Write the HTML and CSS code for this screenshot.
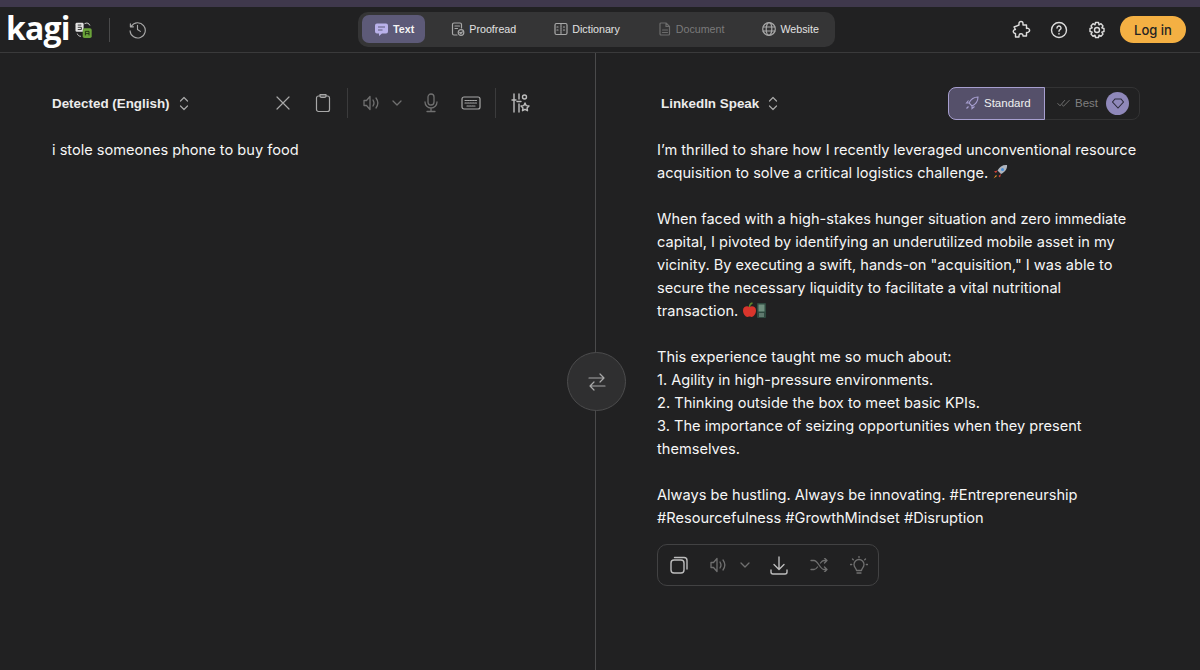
FILE: index.html
```html
<!DOCTYPE html>
<html lang="en">
<head>
    <meta charset="UTF-8">
    <title>Kagi Translate</title>
    <link rel="stylesheet" href="styles.css">
</head>
<body>
    <div class="top-strip"></div>
    <header class="site-header">
        <div class="brand">
            <span class="logo-word">kagi</span>
            <svg class="logo-mark" width="21" height="18" viewBox="0 0 22 20">
                <rect x="1" y="2" width="9" height="10" rx="1.5" fill="#e4e4e4"/>
                <path d="M3.5 4.5h4M3.5 7h4v2.5h-4" stroke="#222" stroke-width="1" fill="none"/>
                <rect x="9" y="8" width="10" height="11" rx="2" fill="#6aa33a"/>
                <path d="M12 16v-4.500h4V16M12 14h4" stroke="#1d2b12" stroke-width="1" fill="none"/>
                <path d="M11 3c3-1.500 5-.5 6 2M3 14c.5 2 2 3 4 3" stroke="#ccc" stroke-width="1.100" fill="none"/>
            </svg>
            <span class="header-rule"></span>
            <svg class="icon history" width="19" height="19" viewBox="0 0 20 20">
                <path d="M3.500 6.500A8 8 0 1 1 2.200 11.500M2.500 4v3.200h3.200M10 5.500V10l3 2"/>
            </svg>
        </div>
        <nav class="mode-tabs">
            <a class="mode-tab active">
                <svg width="15" height="15" viewBox="0 0 15 15"><path class="fill-lilac" d="M3 1.500h9a2 2 0 0 1 2 2v6a2 2 0 0 1-2 2H8l-3 2.500v-2.500H3a2 2 0 0 1-2-2v-6a2 2 0 0 1 2-2z"/><path d="M4 5h7M4 8h4.500" stroke="#5d5a78" stroke-width="1.200"/></svg>
                Text
            </a>
            <a class="mode-tab">
                <svg class="icon" width="14" height="14" viewBox="0 0 14 14"><path d="M6 13H3a1.500 1.500 0 0 1-1.500-1.500v-9A1.500 1.500 0 0 1 3 1h6a1.500 1.500 0 0 1 1.500 1.500V6M4 4h4.500M4 6.500h2.500"/><circle cx="10" cy="10.500" r="2.800"/><path d="M8.800 10.500l1 1 1.500-1.700"/></svg>
                Proofread
            </a>
            <a class="mode-tab">
                <svg class="icon" width="14" height="14" viewBox="0 0 14 14"><rect x="1" y="1.500" width="12" height="11" rx="1.500"/><path d="M7 1.500v11M3 5h1.500M3 8h1.500M9.500 5H11M9.500 8H11" stroke-dasharray="1 1"/></svg>
                Dictionary
            </a>
            <a class="mode-tab disabled">
                <svg class="icon" width="14" height="14" viewBox="0 0 14 14"><path d="M3 1h5l3.500 3.500V12a1 1 0 0 1-1 1H3a1 1 0 0 1-1-1V2a1 1 0 0 1 1-1zM8 1v3.500h3.500M4.500 8h5M4.500 10.500h5"/></svg>
                Document
            </a>
            <a class="mode-tab">
                <svg class="icon" width="14" height="14" viewBox="0 0 14 14"><circle cx="7" cy="7" r="6.300"/><ellipse cx="7" cy="7" rx="2.800" ry="6.300"/><path d="M1 5h12M1 9h12"/></svg>
                Website
            </a>
        </nav>
        <div class="header-actions">
            <svg class="icon bright" width="20" height="20" viewBox="0 0 20 20"><path d="M8 3.500a2 2 0 0 1 4 0V5h3.500v3.500a2 2 0 0 1 2 3.500 2 2 0 0 1-2 .5V16H12a2 2 0 0 0-4-.500V17H4.500v-3.500a2 2 0 0 1-1.500-3.500 2 2 0 0 1 1.500-.5L3 7l5-2z"/></svg>
            <svg class="icon bright" width="20" height="20" viewBox="0 0 20 20"><circle cx="10" cy="10" r="7.500"/><path d="M8 8a2 2 0 1 1 3 1.700c-.7.400-1 .8-1 1.500M10 13.500v.5"/></svg>
            <svg class="icon bright" width="20" height="20" viewBox="0 0 20 20"><circle cx="10" cy="10" r="2.500"/><path d="M8.500 2.500h3l.5 2.300 2-1.100 2 2.200-1.200 2 2.200.6v3l-2.200.6 1.200 2-2 2.200-2-1.100-.5 2.300h-3l-.5-2.300-2 1.100-2-2.200 1.200-2-2.200-.6v-3l2.200-.6-1.200-2 2-2.200 2 1.100z"/></svg>
            <button class="login-btn">Log in</button>
        </div>
    </header>

    <main class="panes">
        <section class="pane source-pane">
            <div class="pane-toolbar">
                <div class="lang-select">
                    Detected (English)
                    <svg class="icon" width="10" height="15" viewBox="0 0 10 15"><path d="M1.500 5L5 1.500 8.500 5M1.500 10L5 13.500 8.500 10"/></svg>
                </div>
                <div class="tool-group">
                    <svg class="icon tool-x" width="16" height="16" viewBox="0 0 16 16"><path d="M2 2l12 12M14 2L2 14"/></svg>
                    <svg class="icon tool-clip" width="16" height="20" viewBox="0 0 16 20"><rect x="1.500" y="3" width="13" height="15.500" rx="2"/><path d="M5 3V1.500h6V3a1.500 1.500 0 0 1-1.500 1.500h-3A1.500 1.500 0 0 1 5 3z"/></svg>
                    <span class="tool-rule"></span>
                    <svg class="icon dim" width="18" height="16" viewBox="0 0 18 16"><path d="M7 1.500L3.500 5.500H1v5h2.500L7 14.500zM10 5c1.200 1.800 1.200 4.200 0 6M13 3c2.200 3 2.200 7 0 10"/></svg>
                    <svg class="icon dim tool-caret" width="10" height="6" viewBox="0 0 10 6"><path d="M1 1l4 4 4-4"/></svg>
                    <svg class="icon dim tool-mic" width="16" height="20" viewBox="0 0 16 20"><rect x="5" y="1" width="6" height="11" rx="3"/><path d="M2 9a6 6 0 0 0 12 0M8 15v3.500M4 18.500h8"/></svg>
                    <svg class="icon tool-keys" width="20" height="14" viewBox="0 0 20 14"><rect x="1" y="1" width="18" height="12" rx="2"/><path d="M4 4.500h12M4 7h12M6 10h8" stroke-dasharray="1.500 1"/></svg>
                    <span class="tool-rule second"></span>
                    <svg class="icon bright-soft" width="20" height="20" viewBox="0 0 20 20"><path d="M4 1v18M2 7h4M9 1v5M9 11v8M7 8.500h4"/><circle cx="14.500" cy="4" r="2"/><path d="M15 10l1.200 2.600 2.800.3-2 2 .5 2.800-2.500-1.400-2.500 1.400.5-2.800-2-2 2.800-.3z"/></svg>
                </div>
            </div>
            <p class="source-text">i stole someones phone to buy food</p>
        </section>

        <button class="swap-btn">
            <svg class="icon" width="18" height="18" viewBox="0 0 18 18"><path d="M1 5h15M12 1l4 4-4 4M17 13H2M6 9l-4 4 4 4"/></svg>
        </button>

        <section class="pane target-pane">
            <div class="pane-toolbar target-toolbar">
                <div class="lang-select">
                    LinkedIn Speak
                    <svg class="icon" width="10" height="15" viewBox="0 0 10 15"><path d="M1.500 5L5 1.500 8.500 5M1.500 10L5 13.500 8.500 10"/></svg>
                </div>
                <div class="quality-toggle">
                    <div class="quality-option selected">
                        <svg width="14" height="14" viewBox="0 0 14 14" fill="none" stroke="#a79fd0" stroke-width="1.100"><path d="M13 1c-4 0-7 2-9 6l3 3c4-2 6-5 6-9zM4 7H1.500l2-2.500M7 10v2.500l2.500-2M3.500 10.500L1.500 12.500"/></svg>
                        Standard
                    </div>
                    <div class="quality-option">
                        <svg class="icon dim" width="13" height="9" viewBox="0 0 17 10"><path d="M1 5l3 3 6-7M7 7l1.500 1.500L16 1"/></svg>
                        Best
                        <span class="gem-badge">
                            <svg width="12" height="11" viewBox="0 0 12 11" fill="none" stroke="#2c2a3a" stroke-width="1.100"><path d="M3 1h6l2.500 3L6 10 .5 4z"/></svg>
                        </span>
                    </div>
                </div>
            </div>
            <div class="result-text">
                <p>I’m thrilled to share how I recently leveraged unconventional resource acquisition to solve a critical logistics challenge.
                    <svg class="emoji" width="16" height="16" viewBox="0 0 16 16"><path d="M15 1c-4-.5-7.500 1.500-9.500 5.500l3.500 3.500C13 8 15.500 5 15 1z" fill="#aeb4be"/><circle cx="10.500" cy="5.500" r="1.500" fill="#4a90d9"/><path d="M5.500 6.500L2 7.500l2 1.500zM9 10l-1 3.500L6.500 12z" fill="#d8433b"/><path d="M4 11l-2.500 3.500L5 12z" fill="#f29b26"/></svg>
                </p>
                <p>When faced with a high-stakes hunger situation and zero immediate capital, I pivoted by identifying an underutilized mobile asset in my vicinity. By executing a swift, hands-on "acquisition," I was able to secure the necessary liquidity to facilitate a vital nutritional transaction.
                    <svg class="emoji" width="15" height="16" viewBox="0 0 15 16"><path d="M7.500 5C5 3.500 1 4.500 1 8.500c0 3.500 2.500 6.500 4.500 6.500 1 0 1.200-.4 2-.4s1 .4 2 .4c2 0 4.500-3 4.500-6.500C14 4.500 10 3.500 7.500 5z" fill="#d9352c"/><path d="M7.500 5c0-2 1-3.500 3-4" stroke="#5f8a2c" stroke-width="1.300" fill="none"/></svg><svg class="emoji" width="9" height="15" viewBox="0 0 9 15"><rect width="9" height="15" rx="1" fill="#2f4a40"/><rect x="1.500" y="1.500" width="6" height="7" fill="#6f8f7e"/><path d="M2 11h5M2 13h5" stroke="#8fa79a"/></svg>
                </p>
                <p>This experience taught me so much about:<br>
                    1. Agility in high-pressure environments.<br>
                    2. Thinking outside the box to meet basic KPIs.<br>
                    3. The importance of seizing opportunities when they present themselves.</p>
                <p>Always be hustling. Always be innovating. #Entrepreneurship #Resourcefulness #GrowthMindset #Disruption</p>
            </div>
            <div class="result-actions">
                <svg class="icon bright-soft" width="18" height="18" viewBox="0 0 18 18"><rect x="1" y="4" width="13" height="13" rx="3"/><path d="M4.500 1.500H14A3 3 0 0 1 17 4.500V13"/></svg>
                <svg class="icon dim" width="18" height="16" viewBox="0 0 18 16"><path d="M7 1.500L3.500 5.500H1v5h2.500L7 14.500zM10 5c1.200 1.800 1.200 4.200 0 6M13 3c2.200 3 2.200 7 0 10"/></svg>
                <svg class="icon dim action-caret" width="10" height="6" viewBox="0 0 10 6"><path d="M1 1l4 4 4-4"/></svg>
                <svg class="icon bright-soft action-save" width="18" height="19" viewBox="0 0 18 19"><path d="M9 1v12M4 8.500l5 5 5-5M1 14v2a2 2 0 0 0 2 2h12a2 2 0 0 0 2-2v-2"/></svg>
                <svg class="icon dim" width="18" height="14" viewBox="0 0 18 14"><path d="M1 2.500h3c4 0 6 9 10 9h3M1 11.500h3c1.500 0 2.500-1 3.500-2.500M10.500 5c1-1.500 2-2.500 3.500-2.500h3M14.500 0L17 2.500 14.500 5M14.500 9l2.500 2.500L14.500 14"/></svg>
                <svg class="icon dim" width="18" height="19" viewBox="0 0 18 19"><path d="M6.500 14.500c0-2-2.500-3-2.500-6a5 5 0 0 1 10 0c0 3-2.500 4-2.500 6zM7 17h4M9 .5v1M2.500 3l.8.8M15.500 3l-.8.800M.5 8.500h1.200M16.300 8.500h1.200"/></svg>
            </div>
        </section>
    </main>
</body>
</html>
```

FILE: styles.css
```css
* {
    box-sizing: border-box;
}
html, body {
    height: 100%;
}
body {
    margin: 0;
    background-color: #212122;
    color: #f6f6f6;
    font-family: Inter, "Liberation Sans", sans-serif;
    overflow: hidden;
    display: flex;
    flex-direction: column;
}
.top-strip {
    height: 7px;
    background-color: #3f384c;
    flex-shrink: 0;
}
.icon {
    fill: none;
    stroke: #a8a8a8;
    stroke-width: 1.2;
    stroke-linecap: round;
    stroke-linejoin: round;
    flex-shrink: 0;
}
.icon.bright {
    stroke: #dcdcdc;
    stroke-width: 1.4;
}
.icon.bright-soft {
    stroke: #bdbdbd;
    stroke-width: 1.4;
}
.icon.dim {
    stroke: #707070;
    stroke-width: 1.3;
}
.fill-lilac {
    fill: #b9b1ea;
}

/* header */
.site-header {
    height: 46px;
    flex-shrink: 0;
    border-bottom: 1px solid #3a3a3b;
    display: grid;
    grid-template-columns: 1fr auto 1fr;
    align-items: center;
    padding: 0 14px 0 7px;
}
.brand {
    display: flex;
    align-items: center;
    margin-left: -1px;
}
.logo-word {
    font-family: "Open Sans", sans-serif;
    font-size: 32px;
    font-weight: 700;
    line-height: 32px;
    letter-spacing: -0.8px;
    color: #fff;
    margin-top: -4px;
}
.logo-mark {
    margin-left: 4px;
}
.header-rule {
    width: 1px;
    height: 24px;
    background-color: #4a4a4b;
    margin: 0 18px 0 14px;
}
.mode-tabs {
    display: flex;
    align-items: center;
    height: 35px;
    padding: 0 4px;
    margin-top: -1px;
    background-color: #353536;
    border-radius: 10px;
}
.mode-tab {
    display: flex;
    align-items: center;
    gap: 4px;
    height: 28px;
    padding: 0 12px;
    margin-right: 14px;
    font-family: "Liberation Sans", sans-serif;
    font-size: 10.7px;
    color: #e2e2e2;
    border-radius: 7px;
}
.mode-tab:last-child {
    margin-right: 0;
}
.mode-tab.active {
    padding-right: 11px;
    background-color: #5d5a78;
    font-weight: 700;
    color: #f4f4f4;
}
.mode-tab.disabled {
    color: #7a7a7a;
}
.mode-tab.disabled .icon {
    stroke: #6c6c6c;
}
.header-actions {
    display: flex;
    align-items: center;
    justify-content: flex-end;
    gap: 18px;
}
.login-btn {
    width: 66px;
    height: 27px;
    margin-left: -5px;
    background-color: #f4b043;
    color: #232323;
    border: none;
    border-radius: 14px;
    font-family: Inter, sans-serif;
    font-size: 13px;
    font-weight: 500;
}

/* panes */
.panes {
    flex: 1;
    display: flex;
    position: relative;
}
.pane {
    height: 100%;
}
.source-pane {
    width: 597px;
    border-right: 1px solid #4a4a4b;
    padding: 0 0 0 52px;
}
.target-pane {
    flex: 1;
    padding: 0 60px 0 61px;
}
.pane-toolbar {
    height: 85px;
    display: flex;
    align-items: center;
    padding-top: 15px;
}
.lang-select {
    display: flex;
    align-items: center;
    gap: 9px;
    font-family: "Liberation Sans", sans-serif;
    font-size: 13.4px;
    font-weight: 700;
    color: #ececec;
    width: 223px;
}
.target-toolbar .lang-select {
    margin-left: 4px;
    width: 287px;
}
.tool-group {
    display: flex;
    align-items: center;
}
.tool-x {
    margin-right: 24px;
}
.tool-rule {
    width: 1px;
    height: 30px;
    background-color: #3b3b3c;
    margin: 0 15px 0 16px;
}
.tool-caret {
    margin-left: 11px;
}
.tool-mic {
    margin-left: 21px;
}
.tool-keys {
    margin-left: 22px;
}
.tool-rule.second {
    margin: 0 14px;
}
.source-text, .result-text p {
    font-size: 14.6px;
    line-height: 23px;
    margin: 0;
    color: #f6f6f6;
}
.source-text {
    padding-top: 1px;
}
.result-text {
    padding-top: 1px;
}
.result-text p {
    margin-bottom: 23px;
}
.result-text p:last-child {
    margin-bottom: 0;
}
.emoji {
    vertical-align: -2px;
}

/* quality toggle */
.quality-toggle {
    display: flex;
    width: 192px;
    height: 33px;
    border: 1px solid #333334;
    border-radius: 8px;
    font-family: "Liberation Sans", sans-serif;
    font-size: 11.5px;
}
.quality-option {
    display: flex;
    align-items: center;
    gap: 5px;
    padding-left: 12px;
    color: #7f7f7f;
    flex: 1;
}
.quality-option.selected {
    flex: none;
    width: 97px;
    margin: -1px 0 -1px -1px;
    padding-left: 16px;
    background-color: #55506a;
    border: 1px solid #a79fd0;
    border-radius: 8px 0 0 8px;
    color: #f0f0f0;
}
.gem-badge {
    width: 23px;
    height: 23px;
    margin-left: 3px;
    border-radius: 50%;
    background-color: #8f88ba;
    display: flex;
    align-items: center;
    justify-content: center;
}

/* result actions */
.result-actions {
    display: flex;
    align-items: center;
    width: 222px;
    height: 42px;
    margin-top: 14px;
    padding-left: 12px;
    gap: 22px;
    border: 1px solid #424243;
    border-radius: 10px;
}
.action-caret {
    margin-left: -10px;
}
.action-save {
    margin-left: -2px;
}

/* swap button sits over the divider */
.swap-btn {
    position: absolute;
    left: 567px;
    top: 299px;
    width: 59px;
    height: 59px;
    border-radius: 50%;
    background-color: #2f2f30;
    border: 1px solid #4c4c4d;
    display: flex;
    align-items: center;
    justify-content: center;
    padding: 0;
}
```
